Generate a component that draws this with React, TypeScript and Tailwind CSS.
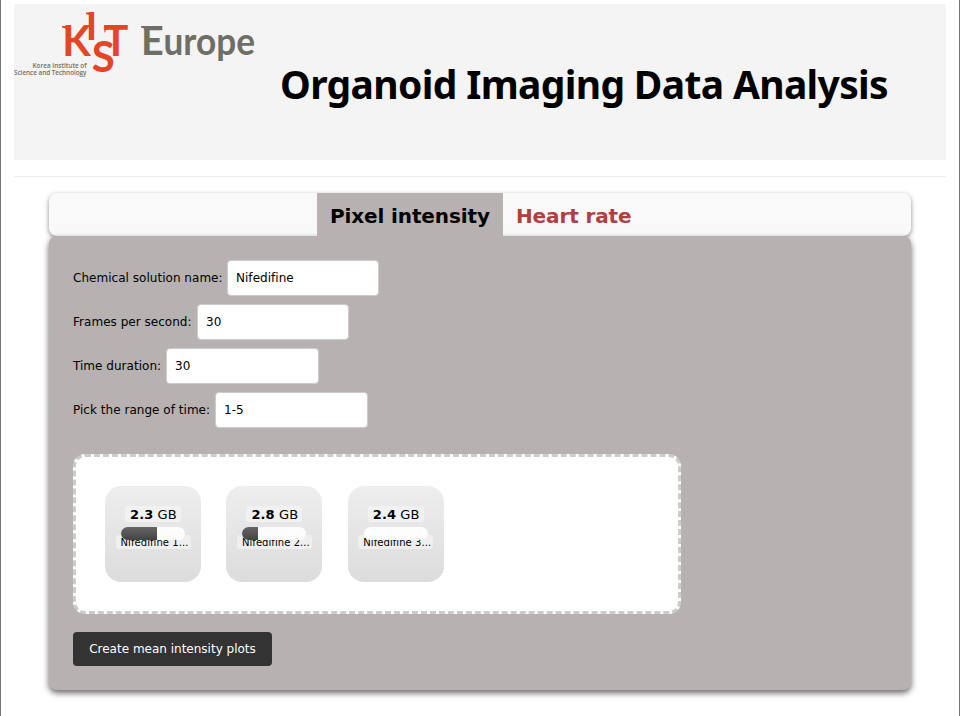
import React from "react";

const fields = [
  { label: "Chemical solution name:", value: "Nifedifine", labelWidth: "w-[154px]", inputWidth: "w-[152px]" },
  { label: "Frames per second:", value: "30", labelWidth: "w-[124px]", inputWidth: "w-[152px]" },
  { label: "Time duration:", value: "30", labelWidth: "w-[93px]", inputWidth: "w-[153px]" },
  { label: "Pick the range of time:", value: "1-5", labelWidth: "w-[142px]", inputWidth: "w-[153px]" },
];

const files = [
  { size: "2.3", name: "Nifedifine 1...", progress: 36 },
  { size: "2.8", name: "Nifedifine 2...", progress: 16 },
  { size: "2.4", name: "Nifedifine 3...", progress: 0 },
];

function Logo() {
  return (
    <svg width="246" height="80" viewBox="14 4 246 80" className="block shrink-0">
      <g fill="#e64427">
        <text fontFamily="Lato, sans-serif" fontWeight="700" fontSize="41.5">
          <tspan x="62.3" y="56">K</tspan>
          <tspan x="85.8" y="40.2" fontSize="38.5">I</tspan>
          <tspan x="91.8" y="72.3" fontSize="42">S</tspan>
          <tspan x="103.5" y="56">T</tspan>
        </text>
        <path d="M62 26h6.500v5h-1.800l-1.200-2.500-3.500-1z" />
        <path d="M86 12.400h6.500v5h-2.500l-.8-2.500-3.200-1z" />
        <path d="M104.400 26h4v3.500l-2.500 .5-.7 2.500h-.8z" />
      </g>
      <g fill="#6e6e64">
        <text x="141" y="54.5" fontFamily="Lato, sans-serif" fontWeight="700" fontSize="39.5">E</text>
        <text x="163.5" y="54.5" fontFamily="Lato, sans-serif" fontWeight="700" fontSize="38.500" textLength="91.500" lengthAdjust="spacingAndGlyphs">urope</text>
        <path d="M141 26h6.500v5h-2.500l-.8-2.500-3.200-1z" />
        <g fontFamily="'Open Sans', sans-serif" fontWeight="600" fontSize="7">
          <text x="32.5" y="68" textLength="54" lengthAdjust="spacingAndGlyphs">Korea Institute of</text>
          <text x="14" y="75" textLength="72.5" lengthAdjust="spacingAndGlyphs">Science and Technology</text>
        </g>
      </g>
    </svg>
  );
}

export default function App() {
  return (
    <div className="h-[716px] w-[960px] overflow-hidden border-x border-[#777] bg-white px-[13px] pt-1 font-['Verdana','DejaVu_Sans',sans-serif] text-black">
      <header className="flex h-[156px] bg-[#f4f4f4]">
        <Logo />
        <h1 className="ml-5 mt-[53px] whitespace-nowrap font-['Noto_Sans',sans-serif] text-[39px] font-bold leading-[54px] tracking-[-0.66px]">
          Organoid Imaging Data Analysis
        </h1>
      </header>
      <hr className="mt-4 border-t border-[#eeeeee]" />
      <main className="mx-[35px] mt-4">
        <nav className="flex h-[43px] rounded-lg bg-[#f9f9f9] pl-[268px] text-[20px] font-bold leading-[46px] tracking-[-0.12px] shadow-[0_2px_5px_rgba(0,0,0,0.45)]">
          <div className="h-[43px] w-[186px] whitespace-nowrap bg-[#b7b1b1] pl-[13px]">Pixel intensity</div>
          <div className="whitespace-nowrap pl-[13px] text-[#b04040]">Heart rate</div>
        </nav>
        <section className="h-[454px] rounded-lg bg-[#b7b1b1] px-6 pt-6 shadow-[0_3px_6px_rgba(0,0,0,0.6)]">
          <div className="flex flex-col gap-2">
            {fields.map((f) => (
              <label key={f.label} className="flex h-9 items-center text-[12px] tracking-[0.03px]">
                <span className={`${f.labelWidth} shrink-0 whitespace-nowrap`}>{f.label}</span>
                <input
                  defaultValue={f.value}
                  className={`${f.inputWidth} h-9 rounded border border-[#ccc] bg-white px-2 text-[12px]`}
                />
              </label>
            ))}
          </div>
          <div className="mt-[26px] flex h-40 w-[608px] gap-[25.4px] rounded-xl border-[3px] border-dashed border-[#ccc] bg-white pl-[29px] pt-[29px]">
            {files.map((f) => (
              <div key={f.name} className="relative flex h-24 w-24 flex-col items-center rounded-[16px] bg-linear-to-b from-[#eeeeee] to-[#dcdcdc] pt-5">
                <div className="h-4 w-14 whitespace-nowrap rounded-[3px] bg-[#f1f1f1] pl-[5px] text-[13px] leading-[17px] tracking-[0.1px]">
                  <b>{f.size}</b> GB
                </div>
                <div className="mt-[13px] h-[14px] w-[75px] whitespace-nowrap rounded-[3px] bg-[#efefef] pl-[5px] text-[10px] leading-[15px] tracking-[0.07px]">{f.name}</div>
                <div className="absolute left-4 top-[41px] h-[13px] w-16 overflow-hidden rounded-full bg-white/90">
                  <div className="h-full bg-linear-to-b from-[#666] to-[#444]" style={{ width: f.progress }} />
                </div>
              </div>
            ))}
          </div>
          <button className="mt-[18px] block h-[34px] w-[199px] whitespace-nowrap rounded bg-[#333] text-[12px] text-white">
            Create mean intensity plots
          </button>
        </section>
      </main>
    </div>
  );
}
